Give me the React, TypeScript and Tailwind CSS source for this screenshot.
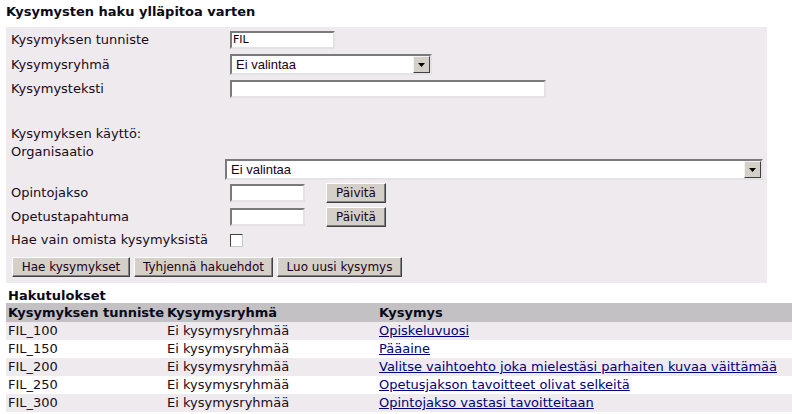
import React from "react";

const inset =
  "border-2 border-t-[#7a7a7a] border-l-[#7a7a7a] border-b-[#e4e2e4] border-r-[#e4e2e4] bg-white";

function TextInput({ w, value }: { w: string; value?: string }) {
  return (
    <div className={`${inset} ${w} h-[18px] flex items-center pl-[1px] text-[11px] text-black`}>
      {value}
    </div>
  );
}

function Arrow() {
  return (
    <div className="w-[17px] h-[17px] bg-[#d4d0c8] border border-t-[#f4f4f4] border-l-[#f4f4f4] border-b-[#404040] border-r-[#404040] flex items-center justify-center">
      <svg width="7" height="4" viewBox="0 0 7 4">
        <polygon points="0,0 7,0 3.5,4" fill="#000" />
      </svg>
    </div>
  );
}

function Select({ w }: { w: string }) {
  return (
    <div className={`${inset} ${w} h-[21px] flex items-center justify-between`}>
      <span className="pl-[4px] text-[13px] text-[#200020]" style={{ fontFamily: '"Liberation Sans", Arial, sans-serif' }}>
        Ei valintaa
      </span>
      <Arrow />
    </div>
  );
}

function Btn({ children, w }: { children: React.ReactNode; w: string }) {
  return (
    <div
      className={`${w} h-[20px] bg-[#d4d0c8] border border-t-white border-l-white border-b-[#404040] border-r-[#404040] flex items-center justify-center text-[12px] text-[#200020] shadow-[inset_-1px_-1px_0_#808080]`}
    >
      {children}
    </div>
  );
}

const rows = [
  ["FIL_100", "Ei kysymysryhmää", "Opiskeluvuosi"],
  ["FIL_150", "Ei kysymysryhmää", "Pääaine"],
  ["FIL_200", "Ei kysymysryhmää", "Valitse vaihtoehto joka mielestäsi parhaiten kuvaa väittämää"],
  ["FIL_250", "Ei kysymysryhmää", "Opetusjakson tavoitteet olivat selkeitä"],
  ["FIL_300", "Ei kysymysryhmää", "Opintojakso vastasi tavoitteitaan"],
];

export default function App() {
  return (
    <div
      className="w-[792px] h-[414px] bg-white overflow-hidden text-[13px] text-[#1a0a1a]"
      style={{ fontFamily: '"DejaVu Sans", Verdana, sans-serif' }}
    >
      <div className="pl-[6px] pt-[2px] h-[27px] font-bold text-[#0a0a1a]">Kysymysten haku ylläpitoa varten</div>
      <div className="ml-[6px] w-[761px] bg-[#eeeaee] pl-[5px] pb-[5px]">
        <div className="flex items-center h-[26px]">
          <div className="w-[219px]">Kysymyksen tunniste</div>
          <TextInput w="w-[105px]" value="FIL" />
        </div>
        <div className="flex items-center h-[23px]">
          <div className="w-[219px]">Kysymysryhmä</div>
          <Select w="w-[202px]" />
        </div>
        <div className="flex items-center h-[25px]">
          <div className="w-[219px]">Kysymysteksti</div>
          <TextInput w="w-[316px]" />
        </div>
        <div className="h-[23px]" />
        <div className="flex items-center h-[20px]">Kysymyksen käyttö:</div>
        <div className="flex items-center h-[15px]">Organisaatio</div>
        <div className="flex items-start h-[22px]">
          <div className="w-[214px]" />
          <Select w="w-[538px]" />
        </div>
        <div className="flex items-center h-[24px]">
          <div className="w-[219px]">Opintojakso</div>
          <TextInput w="w-[75px]" />
          <div className="ml-[21px]">
            <Btn w="w-[60px]">Päivitä</Btn>
          </div>
        </div>
        <div className="flex items-center h-[23px]">
          <div className="w-[219px]">Opetustapahtuma</div>
          <TextInput w="w-[75px]" />
          <div className="ml-[21px]">
            <Btn w="w-[60px]">Päivitä</Btn>
          </div>
        </div>
        <div className="flex items-center h-[24px]">
          <div className="w-[219px]">Hae vain omista kysymyksistä</div>
          <div className="w-[13px] h-[13px] bg-white border border-t-[#404040] border-l-[#404040] border-b-[#c8c8c8] border-r-[#c8c8c8]" />
        </div>
        <div className="flex items-center gap-[4px] h-[22px] mt-[4px] pl-[1px]">
          <Btn w="w-[118px]">Hae kysymykset</Btn>
          <Btn w="w-[139px]">Tyhjennä hakuehdot</Btn>
          <Btn w="w-[125px]">Luo uusi kysymys</Btn>
        </div>
      </div>
      <div className="pl-[8px] pt-[3px] h-[20px] font-bold text-[#0a0a1a]">Hakutulokset</div>
      <div className="ml-[6px]">
        <div className="flex items-center h-[19px] bg-[#c3c1c3] font-bold text-[#0a0a1a]">
          <div className="w-[161px] pl-[2px] whitespace-nowrap">Kysymyksen tunniste</div>
          <div className="w-[212px]">Kysymysryhmä</div>
          <div>Kysymys</div>
        </div>
        {rows.map((r, i) => (
          <div key={r[0]} className={`flex items-center h-[18px] ${i % 2 === 0 ? "bg-[#eeeaee]" : "bg-white"}`}>
            <div className="w-[161px] pl-[2px]">{r[0]}</div>
            <div className="w-[212px]">{r[1]}</div>
            <a href="#" className="text-[#000080] underline whitespace-nowrap">{r[2]}</a>
          </div>
        ))}
      </div>
    </div>
  );
}
